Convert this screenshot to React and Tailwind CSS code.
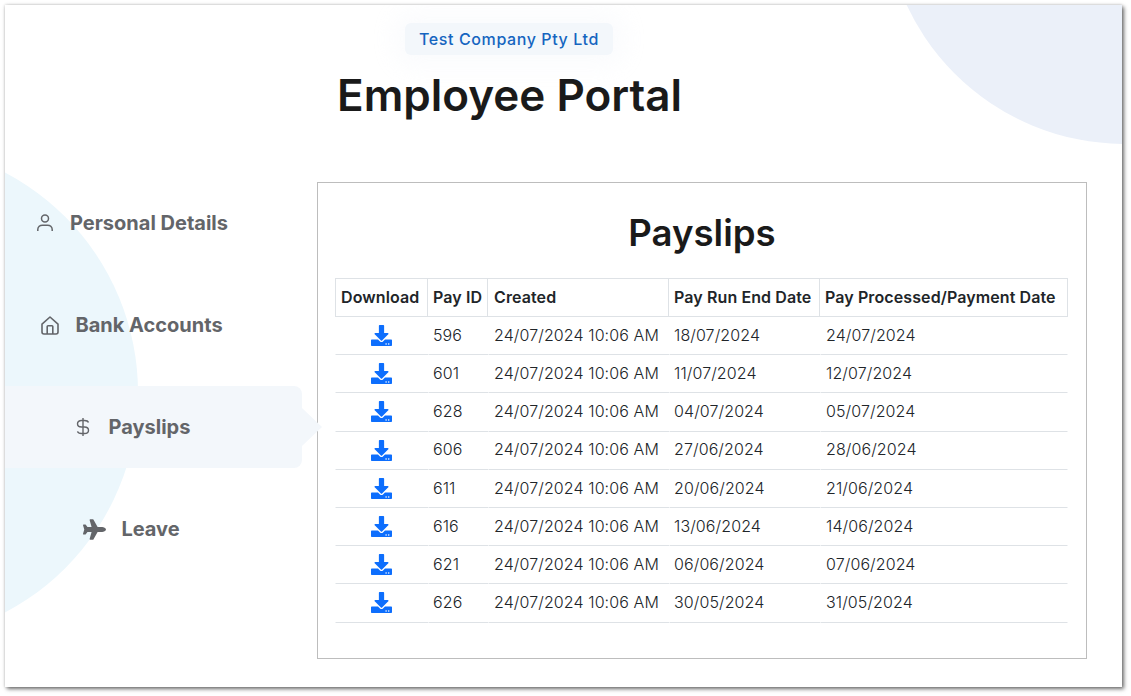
import React from 'react';
import { FaDownload, FaPlane } from 'react-icons/fa';

const rows = [
  ['596', '18/07/2024', '24/07/2024'],
  ['601', '11/07/2024', '12/07/2024'],
  ['628', '04/07/2024', '05/07/2024'],
  ['606', '27/06/2024', '28/06/2024'],
  ['611', '20/06/2024', '21/06/2024'],
  ['616', '13/06/2024', '14/06/2024'],
  ['621', '06/06/2024', '07/06/2024'],
  ['626', '30/05/2024', '31/05/2024'],
];

const PersonIcon = () => (
  <svg width="16" height="18" viewBox="0 0 16 18" fill="none" stroke="#636569" strokeWidth="1.5">
    <circle cx="8" cy="4.4" r="3.5" />
    <path d="M.8 17v-1.400C.8 13 3 11.200 5.400 11.200h5.200c2.400 0 4.600 1.800 4.600 4.400V17" />
  </svg>
);

const HouseIcon = () => (
  <svg width="18" height="19" viewBox="0 0 18 19" fill="none" stroke="#636569" strokeWidth="1.6" strokeLinejoin="round">
    <path d="M1 8.200 9 1l8 7.200V16a2 2 0 0 1-2 2H3a2 2 0 0 1-2-2Z" />
    <path d="M6.200 18V10.500a.8.8 0 0 1 .8-.8h4a.8.8 0 0 1 .8.8V18" />
  </svg>
);

const DollarIcon = () => (
  <svg width="14" height="20" viewBox="0 0 14 20" fill="none" stroke="#636569" strokeWidth="1.4">
    <path d="M7 1v18" />
    <path d="M12.500 5.500C12 4 10.500 3.500 8.500 3.500h-3C3.200 3.500 1.500 4.800 1.500 6.800s1.700 3.200 4 3.200h3c2.300 0 4 1.200 4 3.200s-1.700 3.300-4 3.300h-3c-2 0-3.500-.6-4-2.100" />
  </svg>
);

const NavItem = ({ icon, label, cls, active }) => (
  <div className={`relative h-[82px] w-[297px] flex items-center justify-center ${cls} ${active ? 'bg-[#f3f7fb] rounded-r-lg' : ''}`}>
    {icon}
    <span className="text-[20px] font-[650] text-[#636569]">{label}</span>
    {active && (
      <div className="absolute left-full top-[22px] h-[38px] w-[20px] bg-[#f3f7fb] [clip-path:polygon(0_0,100%_50%,0_100%)]" />
    )}
  </div>
);

export default function App() {
  return (
    <div className="w-[1131px] h-[696px] bg-white p-[5px] font-['Inter',sans-serif] overflow-hidden">
      <div className="relative w-[1117px] h-[682px] bg-white overflow-hidden shadow-[2px_2px_4px_rgba(0,0,0,0.55),0_0_3px_rgba(0,0,0,0.2)]">
        {/* background circles */}
        <div className="absolute left-[879px] top-[-343px] w-[482px] h-[482px] rounded-full bg-[#ebf0f9]" />
        <div className="absolute left-[-364px] top-[139px] w-[497px] h-[497px] rounded-full bg-[#ecf7fc]" />

        <div className="relative">
          <div className="h-[177px] pl-[400px] pt-[18px]">
            <div className="w-[208px] h-[32px] rounded-md bg-[#f3f7fb] flex items-center justify-center text-[16px] font-[450] tracking-[0.6px] text-[#1565c0] shadow-[0_0_24px_10px_rgba(243,247,251,0.45)]">
              Test Company Pty Ltd
            </div>
            <h1 className="absolute left-[332px] top-[62px] text-[44px] leading-[56px] font-semibold text-[#1a1a1a]">Employee Portal</h1>
          </div>

          <div className="flex">
            <div className="w-[312px] flex flex-col gap-5">
              <NavItem icon={<PersonIcon />} label="Personal Details" cls="gap-[17px] pr-[42px]" />
              <NavItem icon={<HouseIcon />} label="Bank Accounts" cls="gap-[16px] pr-[43px]" />
              <NavItem icon={<DollarIcon />} label="Payslips" cls="gap-[19px] pr-[41px]" active />
              <NavItem icon={<FaPlane size={23} color="#636569" />} label="Leave" cls="gap-[15px] pr-[44px]" />
            </div>

            <div className="w-[770px] h-[477px] border border-[#bdbdbd] bg-white px-[17px]">
              <h2 className="h-[95px] pt-[26px] text-center text-[36.6px] leading-[48px] font-semibold text-[#1a1a1a]">Payslips</h2>
              <table className="w-[733px] table-fixed border-separate border-spacing-0 text-[16px] text-[#212529]">
                <thead>
                  <tr className="h-[39px] text-left tracking-[0.1px]">
                    <th className="w-[93px] px-[5px] pb-[2px] font-semibold border border-[#dee2e6] whitespace-nowrap">Download</th>
                    <th className="w-[60px] px-[5px] pb-[2px] font-semibold border-y border-r border-[#dee2e6] whitespace-nowrap">Pay ID</th>
                    <th className="w-[181px] px-[6px] pb-[2px] font-semibold border-y border-r border-[#dee2e6] whitespace-nowrap">Created</th>
                    <th className="w-[151px] px-[5px] pb-[2px] font-semibold border-y border-r border-[#dee2e6] whitespace-nowrap">Pay Run End Date</th>
                    <th className="px-[5px] pb-[2px] font-semibold border-y border-r border-[#dee2e6] whitespace-nowrap">Pay Processed/Payment Date</th>
                  </tr>
                </thead>
                <tbody className="font-[350] tracking-[0.1px]">
                  {rows.map((r) => (
                    <tr key={r[0]} className="h-[38.2px]">
                      <td className="border-b border-l border-b-[#dee2e6] border-l-white">
                        <div className="flex justify-center pr-[2px]">
                          <FaDownload size={21} color="#0d6efd" />
                        </div>
                      </td>
                      <td className="px-[4px] pb-[1.5px] border-b border-l border-b-[#dee2e6] border-l-white">{r[0]}</td>
                      <td className="px-[5px] pb-[1.5px] border-b border-l border-b-[#dee2e6] border-l-white whitespace-nowrap">24/07/2024 10:06 AM</td>
                      <td className="px-[4px] pb-[1.5px] border-b border-l border-b-[#dee2e6] border-l-white">{r[1]}</td>
                      <td className="px-[5px] pb-[1.5px] border-b border-x border-b-[#dee2e6] border-x-white">{r[2]}</td>
                    </tr>
                  ))}
                </tbody>
              </table>
            </div>
          </div>
        </div>
      </div>
    </div>
  );
}
